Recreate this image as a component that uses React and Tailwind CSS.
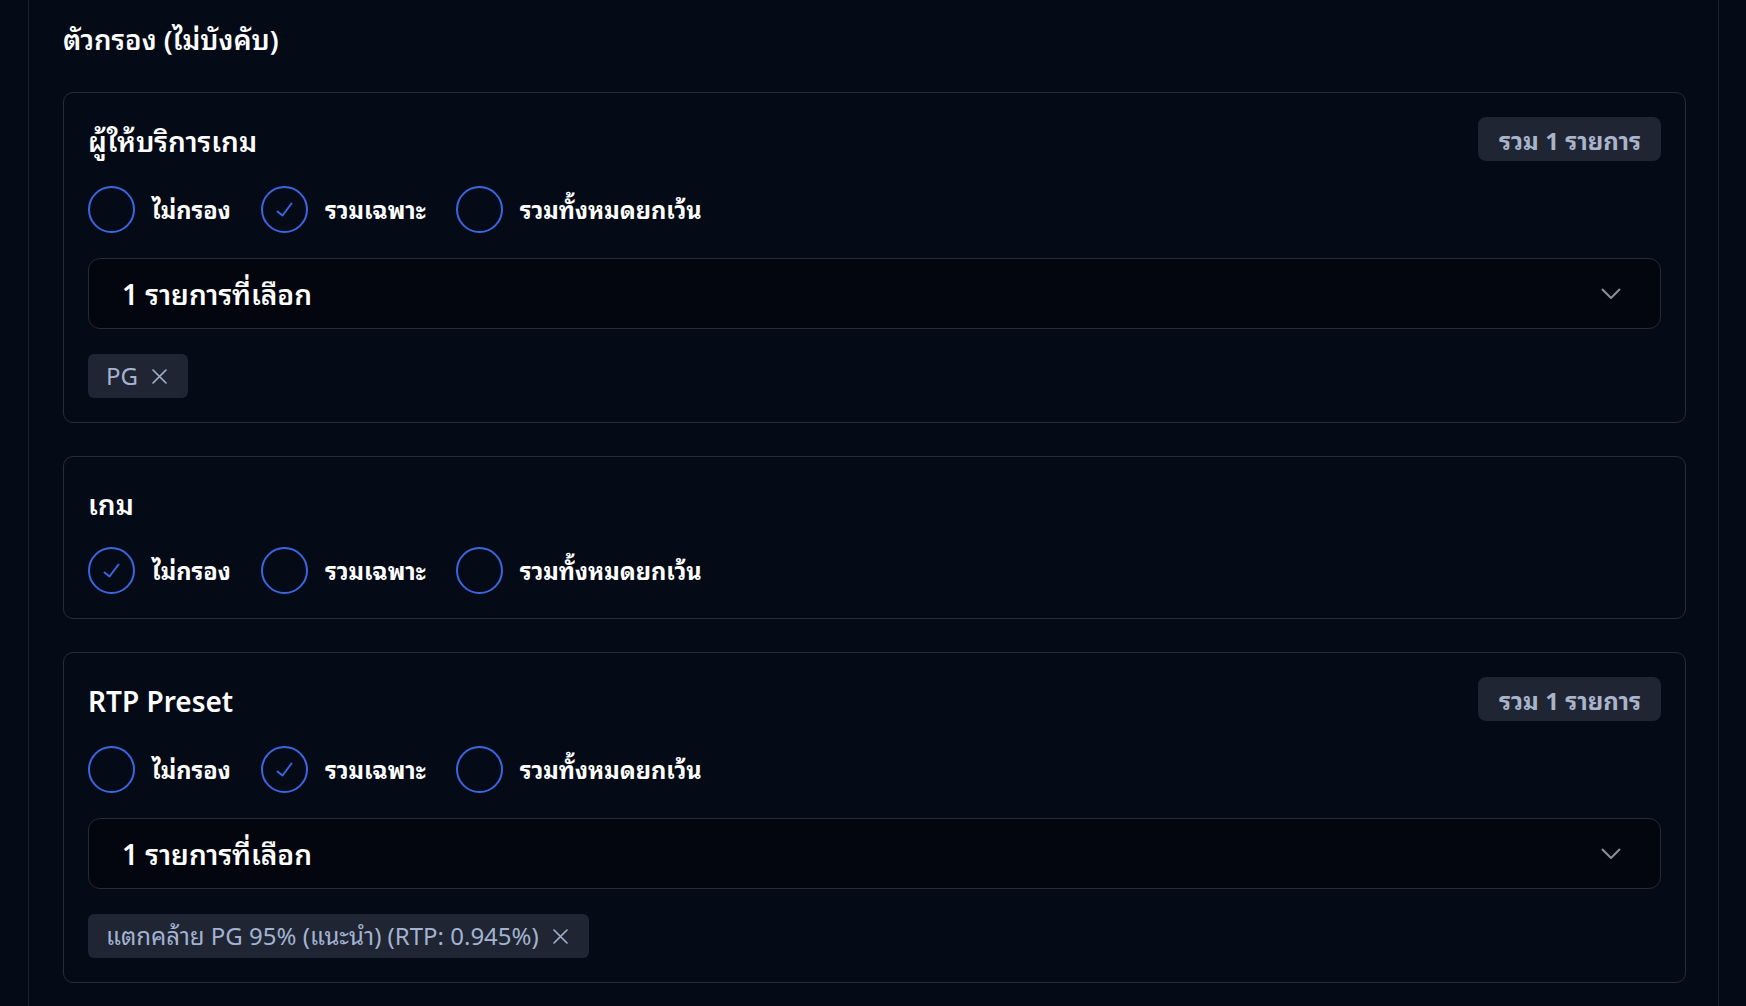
import React from 'react';

const font = { fontFamily: '"Noto Sans", "Noto Sans Thai Looped", "Noto Sans Thai", sans-serif' };

const CheckMark = () => (
  <svg width="17" height="15" viewBox="0 0 17 15" fill="none">
    <polyline points="1.5,9.5 6.5,13.5 15.5,1.5" stroke="#3b66e0" strokeWidth="2" strokeLinecap="round" strokeLinejoin="round" />
  </svg>
);

const Chevron = () => (
  <svg width="20" height="12" viewBox="0 0 20 12" fill="none">
    <polyline points="1.5,1.5 10,10 18.5,1.5" stroke="#8b8f98" strokeWidth="2" strokeLinecap="round" strokeLinejoin="round" />
  </svg>
);

const Cross = () => (
  <svg width="15" height="15" viewBox="0 0 15 15" fill="none">
    <path d="M1 1L14 14M14 1L1 14" stroke="#a3b3d1" strokeWidth="1.6" strokeLinecap="round" />
  </svg>
);

const modes = ['ไม่กรอง', 'รวมเฉพาะ', 'รวมทั้งหมดยกเว้น'];

const RadioRow = ({ active }) => (
  <div className="flex items-center gap-[30px]">
    {modes.map((label, i) => (
      <div key={label} className="flex items-center gap-[17px]">
        <div className="w-[47px] h-[47px] rounded-full border-2 border-[#3b66e0] flex items-center justify-center">
          {i === active && <CheckMark />}
        </div>
        <span className="text-[23.6px] font-bold text-white leading-none pt-[2px]">{label}</span>
      </div>
    ))}
  </div>
);

const FilterCard = ({ title, active, count, tag }) => (
  <div className="border border-[#262c3a] rounded-[10px] p-6 flex flex-col gap-[25px]">
    <div className={`flex items-center justify-between ${count ? 'h-[44px]' : 'h-[41px]'}`}>
      <h3 className="text-[28px] font-semibold text-white leading-none pt-[4px]">{title}</h3>
      {count && (
        <span className="h-[44px] pl-[21px] pr-5 pt-[3px] rounded-lg bg-[#1f2533] text-[#a9b4ca] text-[24px] font-bold flex items-center">
          รวม {count} รายการ
        </span>
      )}
    </div>
    <RadioRow active={active} />
    {tag && (
      <>
        <div className="h-[71px] rounded-xl border border-[#262b38] bg-[#03060f] flex items-center justify-between pl-[33px] pr-[39px]">
          <span className="text-[28px] font-semibold text-white">1 รายการที่เลือก</span>
          <Chevron />
        </div>
        <div className="flex">
          <span className="h-[44px] rounded-md bg-[#1f2533] text-[#a3b3d1] text-[24px] flex items-center gap-[14px] pl-[18px] pr-[21px]">
            {tag}
            <Cross />
          </span>
        </div>
      </>
    )}
  </div>
);

export default function App() {
  return (
    <div className="min-h-screen bg-[#050a17]" style={font}>
      <div className="ml-[28px] w-[1691px] min-h-screen border-x border-[#1c2130] pl-[34px] pr-[32px] pt-[20px] pb-10">
        <h2 className="text-[27.5px] font-semibold text-white leading-[40px] mb-[32px]">ตัวกรอง (ไม่บังคับ)</h2>
        <div className="flex flex-col gap-[33px]">
          <FilterCard title="ผู้ให้บริการเกม" active={1} count={1} tag="PG" />
          <FilterCard title="เกม" active={0} />
          <FilterCard title="RTP Preset" active={1} count={1} tag="แตกคล้าย PG 95% (แนะนำ) (RTP: 0.945%)" />
        </div>
      </div>
    </div>
  );
}
